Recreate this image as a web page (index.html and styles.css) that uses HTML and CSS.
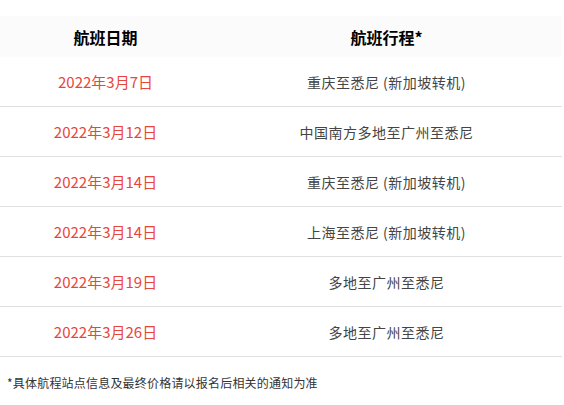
FILE: index.html
```html
<!DOCTYPE html>
<html lang="zh">
<head>
<meta charset="utf-8">
<link rel="stylesheet" href="styles.css">
</head>
<body>
<div class="schedule">
  <div class="row head">
    <div class="cell">航班日期</div>
    <div class="cell">航班行程*</div>
  </div>
  <div class="row">
    <div class="cell date">2022年3月7日</div>
    <div class="cell route">重庆至悉尼 (新加坡转机)</div>
  </div>
  <div class="row">
    <div class="cell date">2022年3月12日</div>
    <div class="cell route">中国南方多地至广州至悉尼</div>
  </div>
  <div class="row">
    <div class="cell date">2022年3月14日</div>
    <div class="cell route">重庆至悉尼 (新加坡转机)</div>
  </div>
  <div class="row">
    <div class="cell date">2022年3月14日</div>
    <div class="cell route">上海至悉尼 (新加坡转机)</div>
  </div>
  <div class="row">
    <div class="cell date">2022年3月19日</div>
    <div class="cell route">多地至广州至悉尼</div>
  </div>
  <div class="row">
    <div class="cell date">2022年3月26日</div>
    <div class="cell route">多地至广州至悉尼</div>
  </div>
</div>
<p class="note">*具体航程站点信息及最终价格请以报名后相关的通知为准</p>
</body>
</html>
```
FILE: styles.css
```css
html, body {
  margin: 0;
  padding: 0;
  background: #fff;
}
body {
  font-family: "Noto Sans CJK SC", "Noto Sans", sans-serif;
}
.schedule {
  width: 562px;
  margin-top: 16px;
}
.row {
  display: grid;
  grid-template-columns: 211px 1fr;
  height: 49px;
  border-bottom: 1px solid #e0e0e0;
  align-items: center;
}
.row.head {
  height: 41px;
  border-bottom: none;
  background: #fbfbfb;
  font-size: 16px;
  font-weight: bold;
  color: #000;
}
.cell {
  text-align: center;
  line-height: 20px;
}
.date {
  font-size: 15px;
  color: #e8463a;
}
.route {
  font-size: 14px;
  color: #444;
  letter-spacing: 0.5px;
}
.note {
  margin: 0;
  padding: 17px 0 0 7px;
  font-size: 12px;
  line-height: 18px;
  color: #333;
  letter-spacing: 0.2px;
}
```
